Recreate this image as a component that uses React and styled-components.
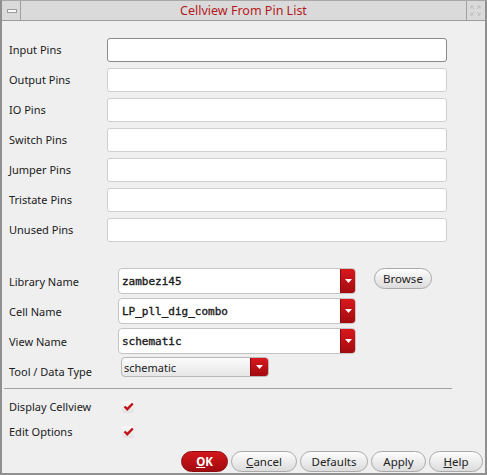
import React from 'react'
import styled, {createGlobalStyle, css} from 'styled-components'

const GlobalStyle = createGlobalStyle`
    html, body {
        margin: 0;
        padding: 0;
        background: #efefef;
    }
    * {
        box-sizing: border-box;
    }
`

const Window = styled.div`
    width: 487px;
    height: 475px;
    background: #efefef;
    border: 2px solid #8f8f8f;
    border-top: 1px solid #a8a8a8;
    display: flex;
    flex-direction: column;
    font-family: 'Noto Sans', 'DejaVu Sans', sans-serif;
    font-size: 11px;
    color: #202020;
    overflow: hidden;
`

const TitleBar = styled.div`
    height: 20px;
    display: flex;
    align-items: stretch;
    background: #dadada;
    border-bottom: 1px solid #9c9c9c;
    padding: 0 1px;
`

const TitleButton = styled.div`
    width: 18px;
    display: flex;
    align-items: center;
    justify-content: center;
    border-left: ${props => (props.right ? '1px solid #a0a0a0' : 'none')};
    border-right: ${props => (props.right ? 'none' : '1px solid #a0a0a0')};
`

const MinBar = styled.div`
    width: 10px;
    height: 4px;
    background: #fafafa;
    border: 1px solid #9a9a9a;
`

const Title = styled.div`
    flex: 1;
    text-align: center;
    color: #b2191d;
    font-size: 12.5px;
    line-height: 19px;
`

const Body = styled.div`
    flex: 1;
    display: flex;
    flex-direction: column;
    padding: 14px 0 0 0;
`

const Row = styled.div`
    display: flex;
    align-items: center;
    height: ${props => props.h || 30}px;
    padding-left: 7px;
`

const Label = styled.div`
    width: ${props => props.w}px;
    flex: none;
    padding-top: ${props => props.drop || 0}px;
    margin-top: ${props => (props.lift ? -2 : 0)}px;
`

const TextField = styled.div`
    width: 340px;
    height: 24px;
    background: #fff;
    border: 1px solid ${props => (props.focused ? '#8a8a8a' : '#cfcfcf')};
    border-radius: 3px;
`

const Spacer = styled.div`
    height: ${props => props.h}px;
`

const Combo = styled.div`
    width: ${props => props.w}px;
    height: ${props => props.h}px;
    display: flex;
    align-items: stretch;
    background: #fff;
    border: 1px solid #c4c4c4;
    border-radius: 4px;
    overflow: hidden;

    ${props =>
        props.small &&
        css`
            background: linear-gradient(#fbfbfb, #e6e6e6);
            border-color: #b8b8b8;
            align-self: flex-start;
            margin-top: 1px;
        `}
`

const ComboText = styled.div`
    flex: 1;
    display: flex;
    align-items: center;
    padding-left: ${props => (props.mono ? 3 : 2)}px;
    font-family: ${props =>
        props.mono ? "'DejaVu Sans Mono', 'Liberation Mono', monospace" : 'inherit'};
    font-size: 11px;
    color: #1a1a1a;
    -webkit-text-stroke: ${props => (props.mono ? '0.35px #1a1a1a' : '0')};
`

const ComboArrow = styled.div`
    width: ${props => props.w || 15}px;
    display: flex;
    align-items: center;
    justify-content: center;
    background: linear-gradient(#d8181e, #a30b0f);
    border-left: 1px solid #8a0a0d;
`

const Arrow = () => (
    <svg width="7" height="4" viewBox="0 0 7 4">
        <path d="M0 0 H7 L3.5 4 Z" fill="#fff" />
    </svg>
)

const PillButton = styled.div`
    height: ${props => props.h || 21}px;
    width: ${props => props.w}px;
    display: flex;
    align-items: center;
    justify-content: center;
    border: 1px solid #a9a9a9;
    border-radius: 11px;
    background: linear-gradient(#fdfdfd, #dcdcdc);
    color: #222;
    font-size: 11.5px;
    flex: none;

    ${props =>
        props.primary &&
        css`
            background: linear-gradient(#d3161c, #a10b0f);
            border-color: #8c0a0d;
            color: #fff;
            font-weight: bold;
        `}
`

const BrowseButton = styled(PillButton)`
    margin-left: 18px;
    align-self: flex-start;
    margin-top: 2px;
`

const Underline = styled.span`
    text-decoration: underline;
`

const Separator = styled.div`
    margin: 8px 33px 0 2px;
    border-top: 1px solid #a3a3a3;
    height: 0;
`

const CheckBox = styled.div`
    width: 12px;
    height: 12px;
    margin-left: 4px;
    border-radius: 2px;
    background: linear-gradient(#f9f9f9, #e2e2e2);
    display: flex;
    align-items: center;
    justify-content: center;
`

const Check = () => (
    <svg width="11" height="9" viewBox="0 0 11 9">
        <path d="M1.5 4.5 L4.3 7.2 L9.8 1.5" stroke="#c1141a" strokeWidth="2.4" fill="none" />
    </svg>
)

const ButtonBar = styled.div`
    display: flex;
    justify-content: flex-end;
    gap: 3px;
    padding: 0 2px 0 0;
    margin-top: 7px;
`

const pins = ['Input Pins', 'Output Pins', 'IO Pins', 'Switch Pins', 'Jumper Pins', 'Tristate Pins', 'Unused Pins']

const combos = [
    {label: 'Library Name', value: 'zambezi45'},
    {label: 'Cell Name', value: 'LP_pll_dig_combo'},
    {label: 'View Name', value: 'schematic'},
]

export default function App() {
    return (
        <>
            <GlobalStyle />
            <Window>
                <TitleBar>
                    <TitleButton>
                        <MinBar />
                    </TitleButton>
                    <Title>Cellview From Pin List</Title>
                    <TitleButton right>
                        <svg width="11" height="11" viewBox="0 0 11 11">
                            <path
                                d="M1 1 L4 4 M1 1 H3.5 M1 1 V3.5 M10 1 L7 4 M10 1 H7.5 M10 1 V3.5 M1 10 L4 7 M1 10 H3.5 M1 10 V7.5 M10 10 L7 7 M10 10 H7.5 M10 10 V7.5"
                                stroke="#bdbdbd"
                                strokeWidth="1"
                                fill="none"
                            />
                        </svg>
                    </TitleButton>
                </TitleBar>
                <Body>
                    {pins.map((p, i) => (
                        <Row key={p}>
                            <Label w={98} lift>
                                {p}
                            </Label>
                            <TextField focused={i === 0} />
                        </Row>
                    ))}
                    <Spacer h={21} />
                    {combos.map((c, i) => (
                        <Row key={c.label}>
                            <Label w={109}>{c.label}</Label>
                            <Combo w={238} h={26}>
                                <ComboText mono>{c.value}</ComboText>
                                <ComboArrow>
                                    <Arrow />
                                </ComboArrow>
                            </Combo>
                            {i === 0 && (
                                <BrowseButton w={58} h={21}>
                                    Browse
                                </BrowseButton>
                            )}
                        </Row>
                    ))}
                    <Row h={24}>
                        <Label w={112} drop={6}>
                            Tool / Data Type
                        </Label>
                        <Combo small w={148} h={20}>
                            <ComboText>schematic</ComboText>
                            <ComboArrow w={18}>
                                <Arrow />
                            </ComboArrow>
                        </Combo>
                    </Row>
                    <Separator />
                    <Spacer h={5} />
                    <Row h={25}>
                        <Label w={109}>Display Cellview</Label>
                        <CheckBox>
                            <Check />
                        </CheckBox>
                    </Row>
                    <Row h={25}>
                        <Label w={109}>Edit Options</Label>
                        <CheckBox>
                            <Check />
                        </CheckBox>
                    </Row>
                    <ButtonBar>
                        <PillButton primary w={47}>
                            <Underline>O</Underline>K
                        </PillButton>
                        <PillButton w={66}>
                            <Underline>C</Underline>ancel
                        </PillButton>
                        <PillButton w={68}>Defaults</PillButton>
                        <PillButton w={55}>Apply</PillButton>
                        <PillButton w={54}>
                            <Underline>H</Underline>elp
                        </PillButton>
                    </ButtonBar>
                </Body>
            </Window>
        </>
    )
}
